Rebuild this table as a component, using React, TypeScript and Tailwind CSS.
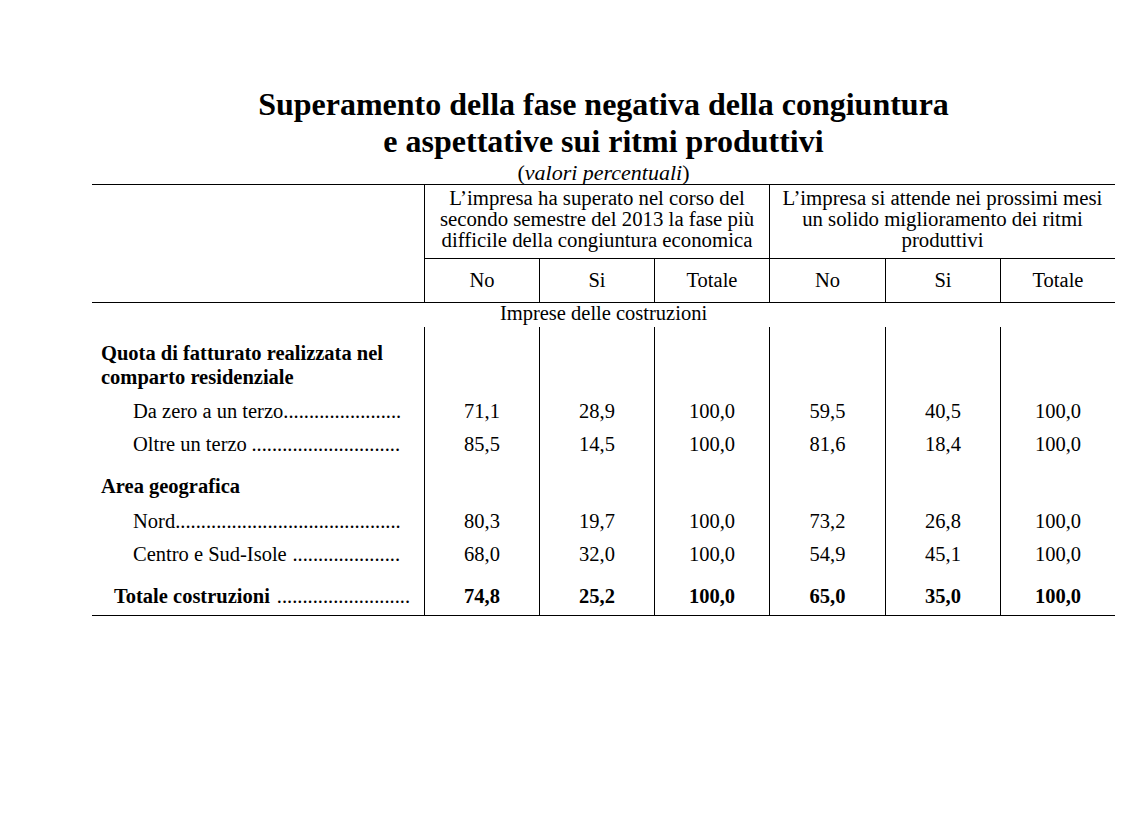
const cols = "grid grid-cols-[332px_115px_115px_115px_116px_115px_115px]";

type RowProps = {
  label?: React.ReactNode;
  values?: string[];
  h: string;
  pt: string;
  indent: string;
  pr?: string;
  bold?: boolean;
  dots?: number;
  leading?: string;
};

function Row({ label, values, h, pt, indent, pr = "pr-[24px]", bold, dots, leading = "leading-[33px]" }: RowProps) {
  const cells = values ?? ["", "", "", "", "", ""];
  return (
    <div className={`${cols} ${h}`}>
      <div className={`${pt} ${indent} ${pr} ${leading} ${bold ? "font-bold" : ""}`}>
        {dots ? (
          <div className="flex justify-between whitespace-nowrap">
            <span>{label}</span>
            <span className="font-normal">{".".repeat(dots)}</span>
          </div>
        ) : (
          label
        )}
      </div>
      {cells.map((v, i) => (
        <div key={i} className={`border-l border-black text-center ${pt} ${leading} ${bold ? "font-bold" : ""}`}>
          {v}
        </div>
      ))}
    </div>
  );
}

export default function App() {
  return (
    <div className="h-[840px] w-[1146px] bg-white pt-[86px] font-['Liberation_Serif',serif] text-[20.5px] text-black">
      <div className="ml-[92px] w-[1023px]">
        {/* Title */}
        <h1 className="text-center text-[32px] font-bold leading-[37px]">
          Superamento della fase negativa della congiuntura
          <br />e aspettative sui ritmi produttivi
        </h1>
        <p className="h-[24px] pt-[3px] text-center text-[22px] leading-[20px]">
          (<span className="italic">valori percentuali</span>)
        </p>

        {/* Header */}
        <div className={`${cols} border-t border-b border-black`}>
          <div className="row-span-2" />
          <div className="col-span-3 h-[73px] border-l border-black pt-[2px] text-center text-[20.8px] leading-[21px] whitespace-nowrap">
            L’impresa ha superato nel corso del
            <br />
            secondo semestre del 2013 la fase più
            <br />
            difficile della congiuntura economica
          </div>
          <div className="col-span-3 h-[73px] border-l border-black pt-[2px] text-center text-[20.8px] leading-[21px] whitespace-nowrap">
            L’impresa si attende nei prossimi mesi
            <br />
            un solido miglioramento dei ritmi
            <br />
            produttivi
          </div>
          {["No", "Si", "Totale", "No", "Si", "Totale"].map((t, i) => (
            <div key={i} className="flex h-[44px] items-center justify-center border-t border-l border-black">
              {t}
            </div>
          ))}
        </div>

        <div className="h-[24px] text-center leading-[20px]">Imprese delle costruzioni</div>

        {/* Body */}
        <div className="border-b border-black">
          <Row
            h="h-[68px]"
            pt="pt-[14px]"
            indent="pl-[9px]"
            leading="leading-[24px]"
            bold
            label={
              <>
                Quota di fatturato realizzata nel
                <br />
                comparto residenziale
              </>
            }
          />
          <Row
            h="h-[33px]"
            pt="pt-0"
            indent="pl-[41px]"
            dots={23}
            label="Da zero a un terzo"
            values={["71,1", "28,9", "100,0", "59,5", "40,5", "100,0"]}
          />
          <Row
            h="h-[33px]"
            pt="pt-0"
            indent="pl-[41px]"
            dots={29}
            label="Oltre un terzo"
            values={["85,5", "14,5", "100,0", "81,6", "18,4", "100,0"]}
          />
          <Row h="h-[44px]" pt="pt-[9px]" indent="pl-[9px]" bold label="Area geografica" />
          <Row
            h="h-[33px]"
            pt="pt-0"
            indent="pl-[41px]"
            dots={44}
            label="Nord"
            values={["80,3", "19,7", "100,0", "73,2", "26,8", "100,0"]}
          />
          <Row
            h="h-[33px]"
            pt="pt-0"
            indent="pl-[41px]"
            dots={21}
            label="Centro e Sud-Isole"
            values={["68,0", "32,0", "100,0", "54,9", "45,1", "100,0"]}
          />
          <Row
            h="h-[44px]"
            pt="pt-[9px]"
            indent="pl-[22px]"
            pr="pr-[14px]"
            bold
            dots={26}
            label="Totale costruzioni"
            values={["74,8", "25,2", "100,0", "65,0", "35,0", "100,0"]}
          />
        </div>
      </div>
    </div>
  );
}
